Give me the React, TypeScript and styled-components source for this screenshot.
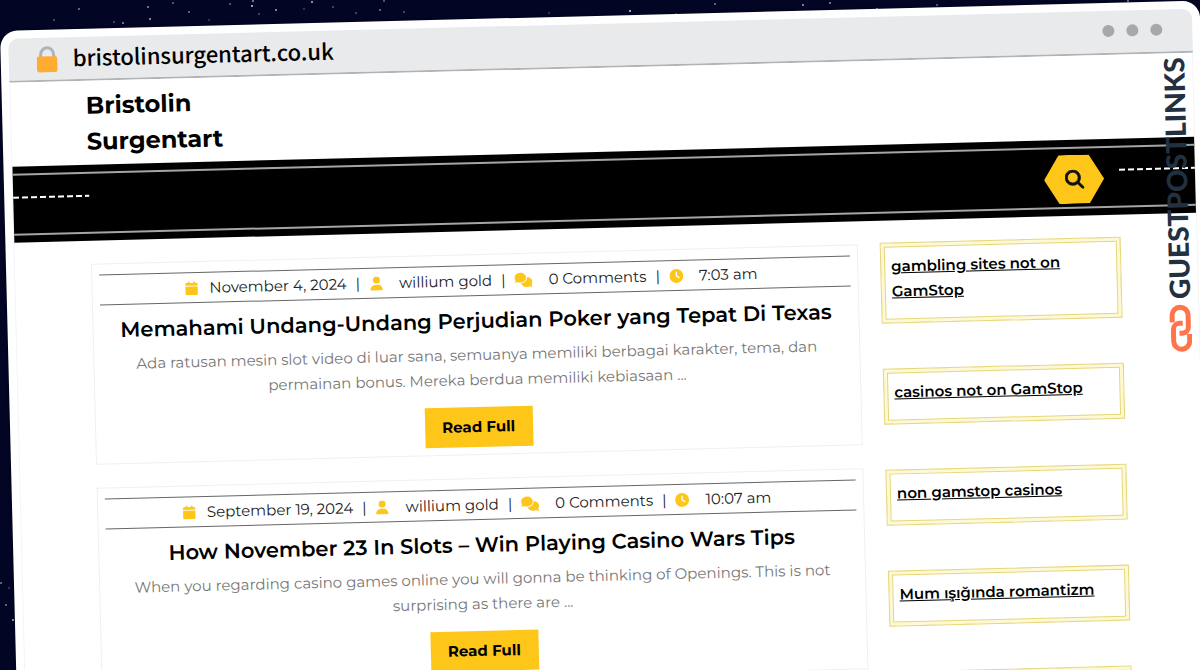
import React from "react";
import styled, { createGlobalStyle } from "styled-components";
import { FaCalendar, FaUser, FaComments, FaClock, FaMagnifyingGlass } from "react-icons/fa6";

const GlobalStyle = createGlobalStyle`
  *, *::before, *::after { box-sizing: border-box; }
  body { margin: 0; background: #020524; }
  h1, h2, p, ul { margin: 0; padding: 0; }
`;

const sans = `Montserrat, Inter, "Liberation Sans", sans-serif`;
const yellow = "#ffc61a";

const Scene = styled.div`
  position: relative;
  height: 100vh;
  overflow: hidden;
  padding-top: 31px;
  background: #020524;
  font-family: ${sans};
  color: #000;
`;

const Sky = styled.svg`
  position: absolute;
  inset: 0;
  width: 100%;
  height: 100%;
`;

const BrowserWindow = styled.div`
  position: relative;
  min-height: 110vh;
  padding: 8px;
  background: #fff;
  border-radius: 17px;
  box-shadow: 0 0 3px rgba(0, 0, 0, 0.6);
  transform: rotate(-1.45deg);
  transform-origin: 0 0;
`;

const AddressBar = styled.div`
  display: flex;
  align-items: center;
  height: 44px;
  padding: 0 30px 0 28px;
  background: #e8eaec;
  border-bottom: 2px solid #b1b3b6;
  border-radius: 10px 10px 0 0;
`;

const LockIcon = styled.svg`
  width: 21px;
  height: 27px;
  margin-right: 15px;
`;

const Domain = styled.span`
  flex: 1;
  padding-bottom: 5px;
  font-family: "Noto Sans CJK SC", "Noto Sans", sans-serif;
  font-size: 22px;
  font-weight: 500;
  line-height: 36px;
`;

const Dots = styled.div`
  display: flex;
  gap: 12px;
  margin-bottom: 3px;
`;

const Dot = styled.span`
  width: 12px;
  height: 12px;
  border-radius: 50%;
  background: #a6a8ab;
`;

const Site = styled.div`
  border: solid #f4f4f4;
  border-width: 0 1px;
`;

const Brand = styled.h1`
  width: 220px;
  height: 84px;
  padding: 7px 0 0 75px;
  font-size: 24px;
  font-weight: 700;
  line-height: 36px;
`;

const NavBar = styled.nav`
  display: flex;
  flex-direction: column;
  height: 76px;
  padding: 7px 0;
  background: #000;
`;

const NavTrack = styled.div`
  flex: 1;
  display: flex;
  align-items: flex-start;
  border: solid #a5a5a5;
  border-width: 2px 0;
`;

const Dashes = styled.span`
  width: 76px;
  height: 2px;
  margin-top: 21px;
  background: repeating-linear-gradient(to right, #fff 0 6px, transparent 6px 9px);
`;

const SearchButton = styled.button`
  display: grid;
  place-items: center;
  width: 60px;
  height: 49px;
  margin: 6px 15px 0 auto;
  padding: 0;
  border: 0;
  background: ${yellow};
  clip-path: polygon(25% 0, 75% 0, 100% 50%, 75% 100%, 25% 100%, 0 50%);
  color: #111;
  font-size: 19px;

  svg {
    stroke: currentColor;
    stroke-width: 20;
  }
`;

const Columns = styled.div`
  display: grid;
  grid-template-columns: minmax(0, 1fr) 241px;
  gap: 22px;
  padding: 22px 76px 0 76px;
`;

const Posts = styled.main`
  display: flex;
  flex-direction: column;
  gap: 23px;
  padding-top: 1px;
`;

const Card = styled.article`
  display: flex;
  flex-direction: column;
  align-items: center;
  height: 201px;
  padding: 10px 7px 7px;
  border: 1px solid #f0f0f0;
  text-align: center;
`;

const Meta = styled.div`
  display: flex;
  align-items: center;
  justify-content: center;
  align-self: stretch;
  height: 31px;
  padding-right: 8px;
  border: solid #666;
  border-width: 1px 0;
  font-size: 15px;
  line-height: 28px;
  color: #222;
`;

const MetaItem = styled.span<{ $gap: number; $icon?: number }>`
  display: flex;
  align-items: center;

  &:not(:first-child)::before {
    content: "|";
    margin: 0 9px;
  }

  svg {
    margin-right: ${(p) => p.$gap}px;
    color: ${yellow};
    font-size: ${(p) => p.$icon ?? 14}px;
  }
`;

const PostTitle = styled.h2`
  margin-top: 11px;
  font-size: 21px;
  font-weight: 600;
  line-height: 28px;
`;

const Excerpt = styled.p`
  width: 700px;
  max-width: 100%;
  margin-top: 7px;
  font-size: 15px;
  line-height: 25px;
  color: #777;
`;

const ReadButton = styled.button`
  width: 108px;
  height: 40px;
  margin-top: auto;
  padding: 0 0 2px;
  border: 0;
  background: ${yellow};
  font-family: ${sans};
  font-size: 15px;
  font-weight: 700;
  color: #000;
`;

const Sidebar = styled.aside`
  display: flex;
  flex-direction: column;
  gap: 45px;
`;

const Widget = styled.div`
  min-height: 56px;
  padding: 10px 12px 19px 10px;
  border: 1px solid #e6d678;
  box-shadow: inset 0 0 0 3px #fdf9d6, inset 0 0 0 4px #e6d678;
`;

const WidgetLink = styled.a`
  font-size: 15px;
  font-weight: 600;
  line-height: 25px;
  color: #000;
  text-decoration: underline;
`;

const Watermark = styled.div`
  position: absolute;
  top: 56px;
  right: 16px;
  display: flex;
  flex-direction: column;
  align-items: center;
  gap: 5px;
  width: 24px;
`;

const WatermarkText = styled.span`
  writing-mode: vertical-rl;
  transform: rotate(180deg);
  font-family: Lato, sans-serif;
  font-size: 28px;
  font-weight: 900;
  line-height: 24px;
  color: #22303f;
`;

const stars: Array<[number, number, number]> = [
  [79, 9, 0.6], [54, 20, 0.4], [114, 22, 0.4], [123, 23, 0.7], [150, 19, 0.8], [148, 7, 0.7],
  [173, 3, 0.5], [189, 12, 0.6], [209, 20, 0.3], [230, 4, 0.5], [252, 6, 1], [253, 1, 0.7],
  [259, 14, 0.4], [276, 10, 0.8], [304, 9, 0.3], [312, 2, 0.9], [333, 7, 0.4], [356, 13, 0.4],
  [380, 10, 0.6], [384, 1, 0.5], [404, 12, 0.4], [549, 13, 0.3], [630, 11, 1], [659, 21, 0.9],
  [676, 14, 0.5], [715, 4, 0.6], [787, 12, 0.4], [803, 5, 0.8], [830, 3, 0.7], [877, 9, 0.9],
  [937, 5, 0.5], [1128, 1, 0.7], [1, 583, 0.6], [9, 588, 0.3], [6, 605, 0.6], [13, 620, 0.9],
];

const posts = [
  {
    date: "November 4, 2024",
    time: "7:03 am",
    title: "Memahami Undang-Undang Perjudian Poker yang Tepat Di Texas",
    lines: [
      "Ada ratusan mesin slot video di luar sana, semuanya memiliki berbagai karakter, tema, dan",
      "permainan bonus. Mereka berdua memiliki kebiasaan ...",
    ],
  },
  {
    date: "September 19, 2024",
    time: "10:07 am",
    title: "How November 23 In Slots – Win Playing Casino Wars Tips",
    lines: [
      "When you regarding casino games online you will gonna be thinking of Openings. This is not",
      "surprising as there are ...",
    ],
  },
];

const links = [
  "gambling sites not on GamStop",
  "casinos not on GamStop",
  "non gamstop casinos",
  "Mum ışığında romantizm",
];

export default function App() {
  return (
    <Scene>
      <GlobalStyle />
      <Sky aria-hidden="true">
        {stars.map(([x, y, o]) => (
          <circle key={`${x}-${y}`} cx={x} cy={y} r={1} fill="#c9d2ec" opacity={o} />
        ))}
      </Sky>
      <BrowserWindow>
        <AddressBar>
          <LockIcon viewBox="0 0 21 27" aria-hidden="true">
            <path d="M4 13V9a6.5 7 0 0 1 13 0v4" fill="none" stroke="#adb3bb" strokeWidth="3" />
            <rect x="0" y="10.500" width="20.500" height="16" rx="2.500" fill="#ffac33" />
          </LockIcon>
          <Domain>bristolinsurgentart.co.uk</Domain>
          <Dots>
            <Dot />
            <Dot />
            <Dot />
          </Dots>
        </AddressBar>
        <Site>
          <Brand>Bristolin Surgentart</Brand>
          <NavBar>
            <NavTrack>
              <Dashes />
              <SearchButton aria-label="Search">
                <FaMagnifyingGlass />
              </SearchButton>
              <Dashes />
            </NavTrack>
          </NavBar>
          <Columns>
            <Posts>
              {posts.map((post) => (
                <Card key={post.title}>
                  <Meta>
                    <MetaItem $gap={11}><FaCalendar />{post.date}</MetaItem>
                    <MetaItem $gap={16}><FaUser />willium gold</MetaItem>
                    <MetaItem $gap={16} $icon={18}><FaComments />0 Comments</MetaItem>
                    <MetaItem $gap={16}><FaClock />{post.time}</MetaItem>
                  </Meta>
                  <PostTitle>{post.title}</PostTitle>
                  <Excerpt>
                    {post.lines[0]}
                    <br />
                    {post.lines[1]}
                  </Excerpt>
                  <ReadButton>Read Full</ReadButton>
                </Card>
              ))}
            </Posts>
            <Sidebar>
              {links.map((label) => (
                <Widget key={label}>
                  <WidgetLink href="#">{label}</WidgetLink>
                </Widget>
              ))}
              <Widget />
            </Sidebar>
          </Columns>
        </Site>
        <Watermark>
          <WatermarkText>GUESTPOSTLINKS</WatermarkText>
          <svg width="24" height="48" viewBox="0 0 24 48" fill="none" stroke="#ff7448" strokeWidth="5" aria-hidden="true">
            <path d="M4.500 18V11a8 8 0 0 1 16 0v12a6 6 0 0 1-6 6h-3" />
            <path d="M21.500 30v7a8 8 0 0 1-16 0V25a6 6 0 0 1 6-6h3.500" />
          </svg>
        </Watermark>
      </BrowserWindow>
    </Scene>
  );
}
